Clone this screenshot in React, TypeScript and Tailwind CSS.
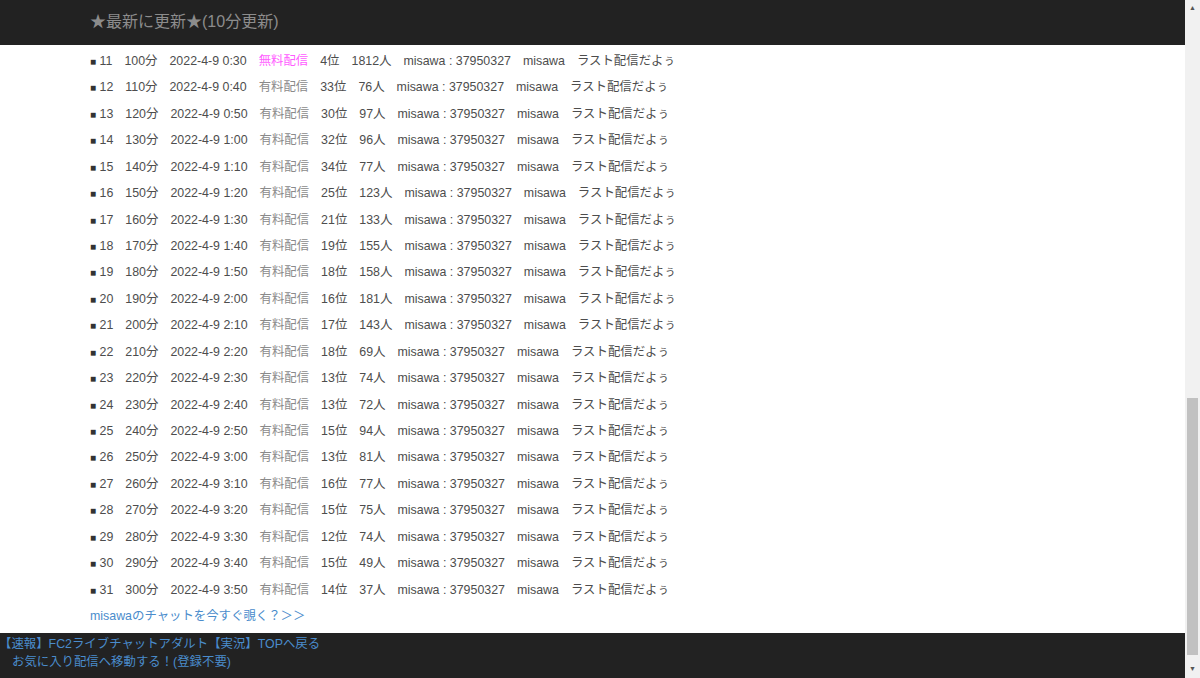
const ROWS: [number, string, number][] = [
  [11, "0:30", 4], [12, "0:40", 33], [13, "0:50", 30], [14, "1:00", 32],
  [15, "1:10", 34], [16, "1:20", 25], [17, "1:30", 21], [18, "1:40", 19],
  [19, "1:50", 18], [20, "2:00", 16], [21, "2:10", 17], [22, "2:20", 18],
  [23, "2:30", 13], [24, "2:40", 13], [25, "2:50", 15], [26, "3:00", 13],
  [27, "3:10", 16], [28, "3:20", 15], [29, "3:30", 12], [30, "3:40", 15],
  [31, "3:50", 14],
];

const PEOPLE = [1812, 76, 97, 96, 77, 123, 133, 155, 158, 181, 143, 69, 74, 72, 94, 81, 77, 75, 74, 49, 37];

function Row({ no, time, rank, people, idx }: { no: number; time: string; rank: number; people: number; idx: number }) {
  const free = idx === 0;
  return (
    <div className="flex items-center gap-[12px] h-[26.45px] text-[12.4px] text-[#4d4d4d]">
      <span>
        <span className="text-[10px] text-[#333]">■</span> {no}
      </span>
      <span>{(idx + 10) * 10}分</span>
      <span>2022-4-9 {time}</span>
      <span className={free ? "text-[#ff5cff]" : "text-[#8a8a8a]"}>{free ? "無料配信" : "有料配信"}</span>
      <span>{rank}位</span>
      <span>{people}人</span>
      <span>misawa : 37950327</span>
      <span>misawa</span>
      <span>ラスト配信だよぅ</span>
    </div>
  );
}

export default function App() {
  return (
    <div
      className="flex w-[1200px] h-[678px] overflow-hidden bg-white"
      style={{ fontFamily: '"Liberation Sans", Arial, "Noto Sans CJK JP", sans-serif' }}
    >
      <div className="flex flex-col flex-1 min-w-0">
        <header className="h-[45px] bg-[#222] flex items-center pl-[90px] pb-[2px] shrink-0">
          <span className="text-[16px] text-[#8c8c8c]">★最新に更新★(10分更新)</span>
        </header>
        <main className="flex-1 pl-[90px] pt-[3px]">
          {ROWS.map(([no, time, rank], i) => (
            <Row key={no} no={no} time={time} rank={rank} people={PEOPLE[i]} idx={i} />
          ))}
          <div className="h-[26px] flex items-center text-[12.4px] text-[#4a8ccc]">
            misawaのチャットを今すぐ覗く？＞＞
          </div>
        </main>
        <footer className="h-[45px] bg-[#222] shrink-0 pt-[2px] text-[12.4px] leading-[18px] text-[#4a8ccc]">
          <div className="-ml-[1px]">【速報】FC2ライブチャットアダルト【実況】TOPへ戻る</div>
          <div className="pl-[12px]">お気に入り配信へ移動する！(登録不要)</div>
        </footer>
      </div>
      <div className="w-[15px] bg-[#f1f1f1] flex flex-col items-center shrink-0">
        <div className="h-[17px] flex items-center justify-center text-[7px] text-[#555]">▲</div>
        <div className="flex-1" />
        <div className="w-[11px] h-[257px] bg-[#c1c1c1] mb-[6px]" />
        <div className="h-[17px] flex items-center justify-center text-[7px] text-[#555]">▼</div>
      </div>
    </div>
  );
}
